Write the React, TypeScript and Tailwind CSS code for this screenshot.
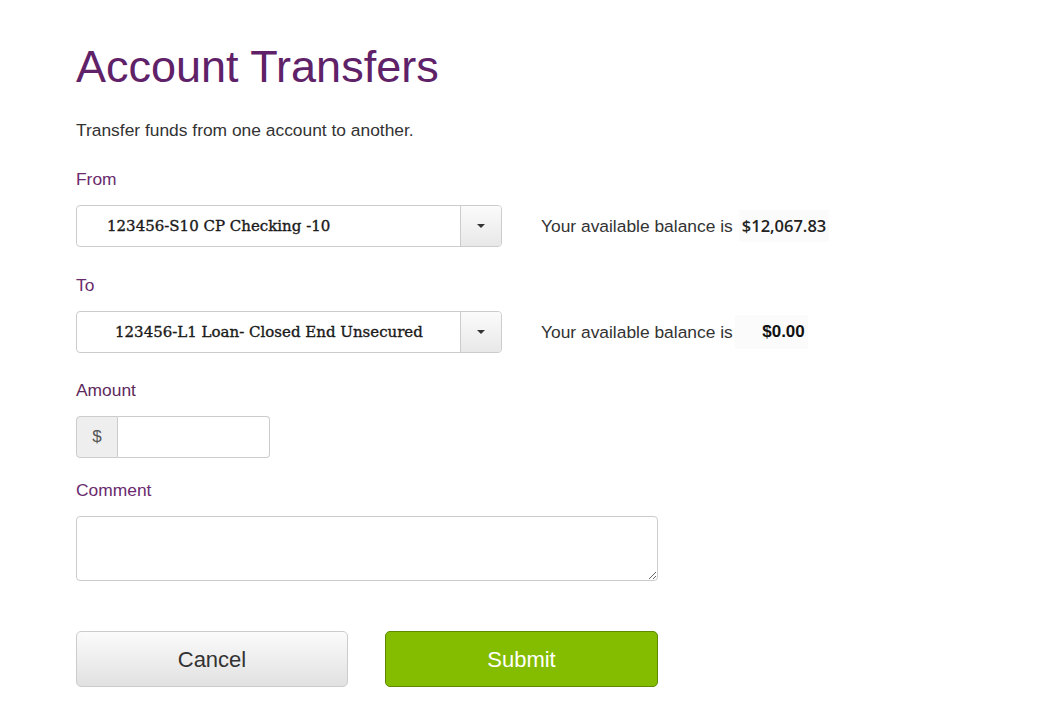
import React from "react";

function Caret() {
  return (
    <svg width="10" height="6" viewBox="0 0 10 6">
      <path d="M1 1h8L5 5z" fill="#333" />
    </svg>
  );
}

function SelectBox({ text, padLeft }: { text: string; padLeft: string }) {
  return (
    <div className="flex h-[42px] w-[426px] rounded-[4px] border border-[#cccccc] bg-white overflow-hidden">
      <div className={`flex flex-1 items-center ${padLeft}`}>
        <span
          className="text-[15px] text-[#1a1a1a] whitespace-nowrap [-webkit-text-stroke:0.35px_#1a1a1a]"
          style={{ fontFamily: '"DejaVu Serif", "Liberation Serif", serif' }}
        >
          {text}
        </span>
      </div>
      <div className="flex w-[41px] items-center justify-center border-l border-[#cccccc] bg-gradient-to-b from-[#fbfbfb] to-[#e8e8e8]">
        <Caret />
      </div>
    </div>
  );
}

export default function App() {
  const sans = { fontFamily: '"Liberation Sans", Arial, sans-serif' };
  return (
    <div className="min-h-[704px] w-full bg-white pl-[76px] pt-[42px]" style={sans}>
      <h1 className="text-[45px] leading-[50px] text-[#5f2167]">Account Transfers</h1>
      <p className="mt-[28px] text-[17.4px] leading-[20px] text-[#333333]">
        Transfer funds from one account to another.
      </p>

      <div className="mt-[29px] text-[17.4px] leading-[20px] text-[#6a2a6e]">From</div>
      <div className="mt-[16px] flex items-center">
        <SelectBox text="123456-S10 CP Checking -10" padLeft="pl-[30px]" />
        <div className="ml-[39px] flex items-center">
          <span className="text-[17.4px] text-[#333333]">Your available balance is</span>
          <span
            className="ml-[6px] bg-[#fbfbfb] px-[3px] py-[4px] text-[16.5px] font-semibold text-[#222222]"
            style={{ fontFamily: '"Open Sans", sans-serif' }}
          >
            $12,067.83
          </span>
        </div>
      </div>

      <div className="mt-[28px] text-[17.4px] leading-[20px] text-[#6a2a6e]">To</div>
      <div className="mt-[16px] flex items-center">
        <SelectBox text="123456-L1 Loan- Closed End Unsecured" padLeft="pl-[38px]" />
        <div className="ml-[39px] flex items-center">
          <span className="text-[17.4px] text-[#333333]">Your available balance is</span>
          <span className="ml-[2px] w-[73px] bg-[#fbfbfb] py-[4px] pr-[3px] text-right text-[17px] font-bold text-[#111111]">
            $0.00
          </span>
        </div>
      </div>

      <div className="mt-[27px] text-[17.4px] leading-[20px] text-[#5e2a5c]">Amount</div>
      <div className="mt-[16px] flex h-[42px] w-[194px]">
        <div className="flex w-[42px] items-center justify-center rounded-l-[4px] border border-[#cccccc] bg-[#eeeeee] text-[17px] text-[#555555]">
          $
        </div>
        <input
          className="min-w-0 flex-1 rounded-r-[4px] border border-l-0 border-[#cccccc] bg-white px-2 outline-none"
          type="text"
        />
      </div>

      <div className="mt-[22px] text-[17.4px] leading-[20px] text-[#6a2a6e]">Comment</div>
      <textarea className="mt-[16px] block h-[65px] w-[582px] rounded-[4px] border border-[#cccccc] bg-white outline-none" />

      <div className="mt-[50px] flex gap-[37px]">
        <button className="h-[56px] w-[272px] rounded-[5px] border border-[#cccccc] bg-gradient-to-b from-[#fbfbfb] to-[#e1e1e1] text-[22px] text-[#333333]">
          Cancel
        </button>
        <button className="h-[56px] w-[273px] rounded-[5px] border border-[#5d8a00] bg-[#84bd00] text-[22px] text-white">
          Submit
        </button>
      </div>
    </div>
  );
}
